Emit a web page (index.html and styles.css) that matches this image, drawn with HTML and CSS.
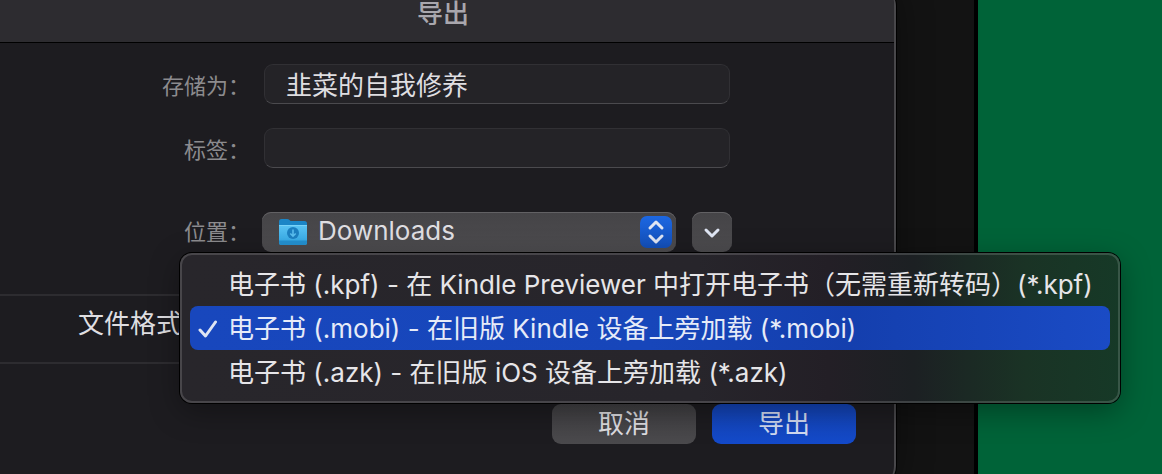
FILE: index.html
```html
<!DOCTYPE html>
<html lang="zh-CN">
<head>
<meta charset="utf-8">
<title>导出</title>
<link rel="stylesheet" href="styles.css">
</head>
<body>
<div class="desktop">
  <form class="dialog">
    <header class="titlebar"><h1 class="title">导出</h1></header>

    <div class="fields">
      <label class="label" for="name">存储为：</label>
      <input class="textbox" id="name" type="text" value="韭菜的自我修养">
      <label class="label" for="tags">标签：</label>
      <input class="textbox" id="tags" type="text">
      <label class="label label-place" for="place">位置：</label>
      <div class="place">
        <div class="popup">
          <select class="popup-select" id="place"><option>Downloads</option></select>
          <svg class="folder" viewBox="0 0 30 28" aria-hidden="true">
            <defs>
              <linearGradient id="front" x1="0" y1="0" x2="0" y2="1">
                <stop offset="0" stop-color="#5cc4f3"/><stop offset="1" stop-color="#2fa5e3"/>
              </linearGradient>
            </defs>
            <path d="M1 3.500Q1 1 3.500 1H9Q10.500 1 11.500 2L12.500 3H26.500Q29 3 29 5.500V24H1Z" fill="#1b85c6"/>
            <path d="M1 7H29V24.500Q29 27 26.500 27H3.500Q1 27 1 24.500Z" fill="url(#front)"/>
            <path d="M1 22.500H29V24.500Q29 27 26.500 27H3.500Q1 27 1 24.500Z" fill="#2491d0"/>
            <path d="M1 7.500H29" stroke="#78d2f8"/>
            <circle cx="15" cy="15" r="6" fill="#1c7fc0"/>
            <path d="M15 11.500V18M12.300 15.500L15 18.200L17.700 15.500" fill="none" stroke="#5cc0ef" stroke-width="1.500"/>
          </svg>
          <span class="stepper">
            <svg viewBox="0 0 32 32" aria-hidden="true"><path d="M10 12L16 6L22 12M10 20L16 26L22 20"/></svg>
          </span>
        </div>
        <button class="expand" type="button" aria-label="展开">
          <svg viewBox="0 0 40 40" aria-hidden="true"><path d="M14 18L20 24L26 18"/></svg>
        </button>
      </div>
    </div>

    <section class="format">
      <span class="format-label" id="format-label">文件格式：</span>
      <ul class="menu" role="listbox" aria-labelledby="format-label">
        <li class="item" role="option" aria-selected="false">电子书 (.kpf) - 在 Kindle Previewer 中打开电子书（无需重新转码）(*.kpf)</li>
        <li class="item item-selected" role="option" aria-selected="true">
          <svg class="check" viewBox="0 0 20 20" aria-hidden="true"><path d="M2 11L7.500 17L17.500 3"/></svg>电子书 (.mobi) - 在旧版 Kindle 设备上旁加载 (*.mobi)</li>
        <li class="item" role="option" aria-selected="false">电子书 (.azk) - 在旧版 iOS 设备上旁加载 (*.azk)</li>
      </ul>
    </section>

    <footer class="actions">
      <button class="button" type="button">取消</button>
      <button class="button button-primary" type="submit">导出</button>
    </footer>
  </form>
  <div class="backdrop"></div>
  <div class="wallpaper"></div>
</div>
</body>
</html>
```
FILE: styles.css
```css
* {
  box-sizing: border-box;
}

body {
  margin: 0;
  background: #121212;
  color: #dfdee1;
  font-family: Inter, "Noto Sans CJK SC", sans-serif;
  font-size: 26px;
}

.desktop {
  display: flex;
  align-items: stretch;
  height: 100vh;
  overflow: hidden;
}

.dialog {
  position: relative;
  z-index: 1;
  flex: 1;
  align-self: flex-start;
  margin: -14px 0 0 -10px;
  border: 0 solid #48474a;
  border-right-width: 2px;
  border-radius: 20px;
  background: #1d1c20;
  box-shadow: 0 0 0 1px #000, 0 0 36px rgba(0, 0, 0, 0.4);
}

.titlebar {
  display: flex;
  justify-content: center;
  height: 57px;
  padding: 10px 0 0 2px;
  border-bottom: 1px solid #000;
  border-radius: 20px 18px 0 0;
  background: #2d2c30;
}

.title {
  margin: 0;
  color: #a9a7ad;
  font-size: 26px;
  font-weight: 500;
  line-height: 36px;
}

.fields {
  display: grid;
  grid-template-columns: 260px 1fr;
  gap: 24px 14px;
  padding: 21px 164px 42px 0;
}

.label {
  height: 40px;
  color: #8c8b8e;
  font-size: 22px;
  line-height: 44px;
  text-align: right;
}

.textbox {
  width: 100%;
  height: 40px;
  padding: 0 22px 2px 21px;
  border: 1px solid #313034;
  border-bottom-color: #4b4a4e;
  border-radius: 9px;
  outline: 0;
  background: #242327;
  color: #dfdee1;
  font: inherit;
}

.label-place,
.place {
  margin-top: 20px;
}

.label-place {
  line-height: 40px;
}

.place {
  display: flex;
  gap: 16px;
  margin-right: -2px;
  margin-left: -2px;
}

.popup {
  display: grid;
  grid-template-columns: 16px 30px 1fr 32px 4px;
  flex: 1;
  align-items: center;
  height: 40px;
  border-radius: 9px;
  background: linear-gradient(#454447, #4d4c4f);
  box-shadow: inset 0 1px #626164;
}

.popup-select {
  grid-area: 1 / 1 / 2 / 6;
  width: 100%;
  height: 40px;
  padding: 0 40px 4px 56px;
  border: 0;
  outline: 0;
  appearance: none;
  background: transparent;
  color: #dfdee1;
  font: inherit;
}

.folder {
  grid-area: 1 / 2;
  width: 30px;
  height: 28px;
  pointer-events: none;
}

.stepper {
  grid-area: 1 / 4;
  height: 32px;
  border-radius: 7px;
  background: linear-gradient(#1c67e2, #134fb8);
  pointer-events: none;
}

.stepper path,
.expand path,
.check path {
  fill: none;
  stroke: #dfe5f3;
  stroke-width: 3;
  stroke-linecap: round;
  stroke-linejoin: round;
}

.expand {
  width: 40px;
  height: 40px;
  padding: 0;
  border: 0;
  border-radius: 9px;
  background: linear-gradient(#454447, #4d4c4f);
  box-shadow: inset 0 1px #626164;
}

.format {
  position: relative;
  height: 70px;
  padding-left: 88px;
  border-top: 2px solid #2d2c30;
  border-bottom: 2px solid #2d2c30;
  line-height: 56px;
}

.menu {
  position: absolute;
  top: -43px;
  left: 190px;
  width: 940px;
  margin: 0;
  padding: 7px 8px;
  border: 2px solid rgba(255, 255, 255, 0.15);
  border-radius: 12px;
  background: linear-gradient(90deg, #28262b 0%, #27252b 55%, #231f26 69%, #1c2023 78%, #1a3325 90%, #163927 100%) border-box;
  box-shadow: 0 0 0 1px #000, 0 8px 30px rgba(0, 0, 0, 0.35);
  list-style: none;
}

.item {
  position: relative;
  height: 44px;
  padding-left: 38px;
  border-radius: 8px;
  color: #e6e5e8;
  line-height: 46px;
  white-space: nowrap;
}

.item-selected {
  background: linear-gradient(90deg, #1847bd 0%, #1746ba 50%, #143fae 72%, #1a4bc5 100%);
  color: #e6ebf8;
}

.check {
  position: absolute;
  top: 13px;
  left: 8px;
  width: 20px;
  height: 20px;
}

.actions {
  display: flex;
  justify-content: flex-end;
  gap: 16px;
  padding: 40px 38px 42px;
}

.button {
  width: 144px;
  height: 40px;
  padding: 0;
  border: 0;
  border-radius: 9px;
  background: linear-gradient(#403f42, #4b4a4d);
  color: #dfdee1;
  font: inherit;
  line-height: 38px;
}

.button-primary {
  background: linear-gradient(#1344b8, #144aca);
  color: #d3dcf2;
}

.backdrop {
  width: 82px;
  border-right: 4px solid #000;
  background: #131313;
}

.wallpaper {
  width: 184px;
  background: #006338;
}
```
